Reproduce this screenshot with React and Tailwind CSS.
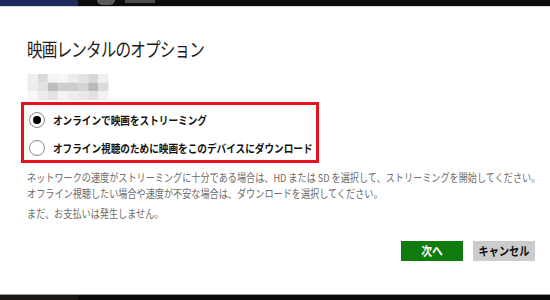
import React from 'react';

const font = { fontFamily: '"Noto Sans CJK JP", "Noto Sans", sans-serif' };

// pixelated (blurred) movie title under the heading
const Mosaic = () => {
  const cells = [
    ['#eeeeee', '#d9d9d9', '#f3f3f3', '#f7f7f7', '#ececec', '#e2e2e2', '#d6d6d6', '#efefef'],
    ['#ececec', '#e0e0e0', '#bdbdbd', '#cfcfcf', '#cdcdcd', '#d4d4d4', '#b9b9b9', '#dadada'],
    ['#f7f7f7', '#ebebeb', '#e3e3e3', '#f5f5f5', '#eeeeee', '#e9e9e9', '#e2e2e2', '#f2f2f2'],
  ];
  return (
    <svg width="84" height="26" viewBox="0 0 84 27" className="block">
      {cells.map((row, r) =>
        row.map((c, i) => <rect key={r + '-' + i} x={i * 10.5} y={r * 9} width="10.5" height="9" fill={c} />)
      )}
    </svg>
  );
};

const Radio = ({ checked }) => (
  <span className="w-[16px] h-[16px] rounded-full border border-[#8a8a8a] bg-white flex items-center justify-center shrink-0">
    {checked && <span className="w-[8px] h-[8px] rounded-full bg-black" />}
  </span>
);

const Option = ({ checked, children }) => (
  <label className="flex items-center h-[18px]">
    <Radio checked={checked} />
    <span className="ml-[8px] text-[11px] leading-[18px] font-bold text-[#111] whitespace-nowrap origin-left scale-x-[0.875]">
      {children}
    </span>
  </label>
);

export default function App() {
  return (
    <div className="w-[550px] h-[300px] flex flex-col bg-white overflow-hidden" style={font}>
      {/* top strip of the app behind the dialog */}
      <div className="h-[6px] flex shrink-0">
        <div className="w-[78px] bg-[#1d2c5c]" />
        <div className="flex-1 bg-[#0c0c0c] flex items-start">
          <div className="ml-[19px] w-[18px] h-[5px] rounded-b-full bg-[#5a5a5a]" />
          <div className="ml-[10px] w-[30px] h-[3px] bg-[#4a4a4a]" />
        </div>
      </div>

      <div className="flex-1 flex flex-col border-t border-[#d8d8d8]">
        <h1 className="ml-[27px] mt-[28px] text-[19px] leading-[28px] tracking-[-1px] text-[#1a1a1a] font-normal whitespace-nowrap origin-left scale-x-[0.82]">
          映画レンタルのオプション
        </h1>
        <div className="ml-[26px] mt-[11px]">
          <Mosaic />
        </div>

        <div className="ml-[21px] mt-[2px] w-[298px] h-[61px] border-[3px] border-[#e8121c] flex flex-col gap-[10px] pt-[6px] pl-[5px]">
          <Option checked>オンラインで映画をストリーミング</Option>
          <Option>オフライン視聴のために映画をこのデバイスにダウンロード</Option>
        </div>

        <div className="ml-[27px] mt-[6px] text-[11px] leading-[16px] text-[#6b6b6b]">
          <p className="whitespace-nowrap origin-left scale-x-[0.83]">
            ネットワークの速度がストリーミングに十分である場合は、HD または SD を選択して、ストリーミングを開始してください。
          </p>
          <p className="whitespace-nowrap origin-left scale-x-[0.83]">
            オフライン視聴したい場合や速度が不安な場合は、ダウンロードを選択してください。
          </p>
          <p className="mt-[4px] whitespace-nowrap origin-left scale-x-[0.83]">まだ、お支払いは発生しません。</p>
        </div>

        <div className="mt-auto mb-[33px] mr-[15px] flex justify-end gap-[10px]">
          <button className="w-[62px] h-[20px] bg-[#107c10] text-white text-[12px] font-bold leading-none flex items-center justify-center">
            <span className="scale-x-[0.9]">次へ</span>
          </button>
          <button className="w-[62px] h-[20px] bg-[#cccccc] text-[#111] text-[12px] font-bold leading-none flex items-center justify-center">
            <span className="whitespace-nowrap scale-x-[0.85]">キャンセル</span>
          </button>
        </div>
      </div>

      {/* bottom strip */}
      <div className="h-[6px] flex shrink-0 border-t border-[#9a9a9a]">
        <div className="w-[78px] bg-[#1a1714]" />
        <div className="flex-1 bg-[#0a0a0a]" />
      </div>
    </div>
  );
}
